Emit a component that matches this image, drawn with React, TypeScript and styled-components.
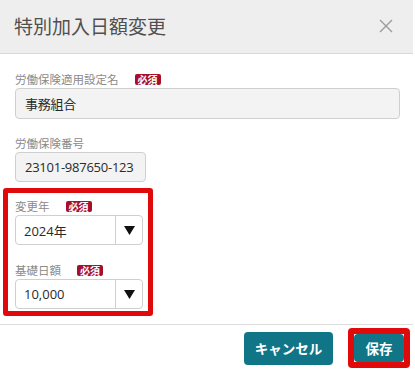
import React from 'react';
import styled, { createGlobalStyle } from 'styled-components';

const GlobalStyle = createGlobalStyle`
  html, body {
    margin: 0;
    padding: 0;
    background: #ffffff;
  }
  body {
    font-family: "Open Sans", "Noto Sans CJK JP", sans-serif;
  }
  * {
    box-sizing: border-box;
  }
`;

const TEAL = '#117588';
const RED = '#e00a0a';

const Modal = styled.div`
  width: 413px;
  height: 374px;
  background: #fff;
  display: flex;
  flex-direction: column;
`;

const Header = styled.div`
  height: 54px;
  flex-shrink: 0;
  background: #eeeeee;
  border-bottom: 1px solid #d9d9d9;
  display: flex;
  align-items: center;
  justify-content: space-between;
  padding: 0 20px 2px 14px;
`;

const Title = styled.h2`
  margin: 0;
  font-family: "Noto Sans CJK JP", sans-serif;
  font-size: 19px;
  font-weight: 400;
  color: #505050;
  letter-spacing: 0;
`;

const CloseButton = styled.button`
  background: none;
  border: none;
  padding: 0;
  width: 14px;
  height: 14px;
  display: flex;
  align-items: center;
  justify-content: center;
  cursor: pointer;
`;

const Body = styled.div`
  padding: 17px 13px 0 15px;
`;

const Field = styled.div<{ $gap?: number }>`
  margin-top: ${p => p.$gap ?? 0}px;
`;

const LabelRow = styled.div`
  height: 16px;
  margin-bottom: 1px;
  display: flex;
  align-items: center;
`;

const Label = styled.span`
  font-family: "Noto Sans CJK JP", sans-serif;
  font-size: 11.5px;
  color: #8a8a8a;
  line-height: 16px;
`;

const Required = styled.span`
  margin-left: 16px;
  height: 11px;
  padding: 0 3px;
  border-radius: 2px;
  background: #a50f2c;
  color: #fff;
  font-family: "Noto Sans CJK JP", sans-serif;
  font-size: 10px;
  font-weight: 700;
  line-height: 11px;
`;

const ReadOnlyInput = styled.div<{ $width?: number }>`
  width: ${p => (p.$width ? `${p.$width}px` : '100%')};
  height: ${p => (p.$width ? 30 : 31)}px;
  background: #f3f3f3;
  border: 1px solid #cfcfcf;
  border-radius: 4px;
  padding: 0 9px;
  display: flex;
  align-items: center;
  font-size: 13px;
  color: #2a2a2a;
  letter-spacing: -0.25px;
  white-space: nowrap;
`;

const Highlight = styled.div`
  margin: 6px 0 0 -12px;
  width: 150px;
  border: 5px solid ${RED};
  border-radius: 3px;
  padding: 5px 5px 2px 7px;
`;

const Select = styled.div`
  width: 128px;
  height: 30px;
  background: #fff;
  border: 1px solid #cfcfcf;
  border-radius: 4px;
  display: flex;
  align-items: stretch;
`;

const SelectValue = styled.div`
  flex: 1;
  display: flex;
  align-items: center;
  padding-left: 8px;
  font-size: 13px;
  color: #2a2a2a;
`;

const SelectArrow = styled.div`
  width: 27px;
  border-left: 1px solid #cfcfcf;
  display: flex;
  align-items: center;
  justify-content: center;
`;

const Footer = styled.div`
  margin-top: 8px;
  border-top: 1px solid #dcdcdc;
  padding: 3px 3px 0 0;
  display: flex;
  justify-content: flex-end;
  align-items: center;
  gap: 15px;
`;

const Button = styled.button<{ $w: number; $h: number }>`
  width: ${p => p.$w}px;
  height: ${p => p.$h}px;
  background: ${TEAL};
  color: #fff;
  border: none;
  border-radius: 4px;
  font-family: "Noto Sans CJK JP", sans-serif;
  font-size: 13.5px;
  font-weight: 700;
  padding: 0;
  cursor: pointer;
`;

const SaveMark = styled.div`
  border: 6px solid ${RED};
  border-radius: 4px;
  display: flex;
`;

const Arrow = () => (
  <svg width="11" height="9" viewBox="0 0 11 9">
    <polygon points="0,0 11,0 5.5,9" fill="#111" />
  </svg>
);

const CloseIcon = () => (
  <svg width="14" height="14" viewBox="0 0 14 14">
    <path d="M1 1 L13 13 M13 1 L1 13" stroke="#9a9a9a" strokeWidth="1.4" fill="none" />
  </svg>
);

const SelectBox = ({ value }: { value: string }) => (
  <Select>
    <SelectValue>{value}</SelectValue>
    <SelectArrow>
      <Arrow />
    </SelectArrow>
  </Select>
);

const App: React.FC = () => {
  return (
    <>
      <GlobalStyle />
      <Modal>
        <Header>
          <Title>特別加入日額変更</Title>
          <CloseButton aria-label="close">
            <CloseIcon />
          </CloseButton>
        </Header>

        <Body>
          <Field>
            <LabelRow>
              <Label>労働保険適用設定名</Label>
              <Required>必須</Required>
            </LabelRow>
            <ReadOnlyInput>
              <span style={{ fontFamily: '"Noto Sans CJK JP", sans-serif' }}>事務組合</span>
            </ReadOnlyInput>
          </Field>

          <Field $gap={16}>
            <LabelRow>
              <Label>労働保険番号</Label>
            </LabelRow>
            <ReadOnlyInput $width={131}>23101-987650-123</ReadOnlyInput>
          </Field>

          <Highlight>
            <Field>
              <LabelRow>
                <Label>変更年</Label>
                <Required>必須</Required>
              </LabelRow>
              <SelectBox value="2024年" />
            </Field>
            <Field $gap={17}>
              <LabelRow>
                <Label>基礎日額</Label>
                <Required>必須</Required>
              </LabelRow>
              <SelectBox value="10,000" />
            </Field>
          </Highlight>
        </Body>

        <Footer>
          <Button $w={89} $h={33}>キャンセル</Button>
          <SaveMark>
            <Button $w={50} $h={28}>保存</Button>
          </SaveMark>
        </Footer>
      </Modal>
    </>
  );
};

export default App;
